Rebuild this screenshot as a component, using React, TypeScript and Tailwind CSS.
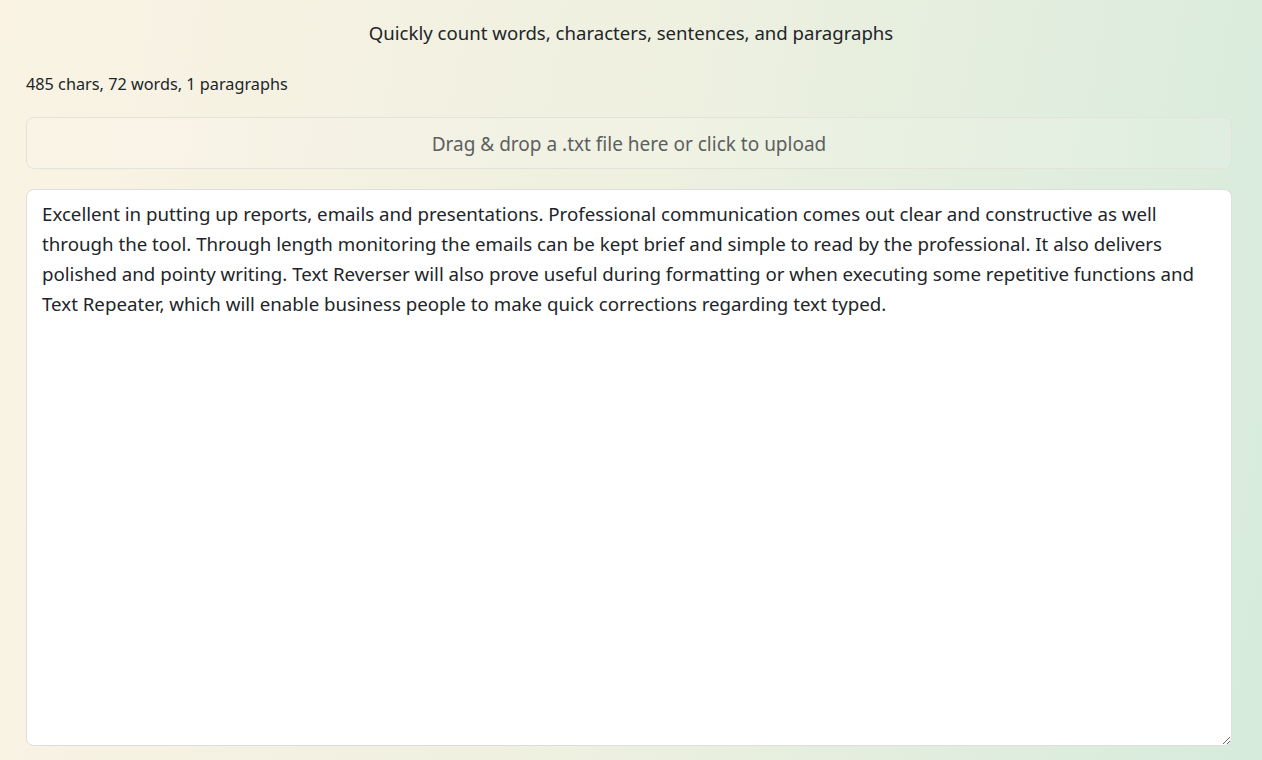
export default function App() {
  const text =
    "Excellent in putting up reports, emails and presentations. Professional communication comes out clear and constructive as well through the tool. Through length monitoring the emails can be kept brief and simple to read by the professional. It also delivers polished and pointy writing. Text Reverser will also prove useful during formatting or when executing some repetitive functions and Text Repeater, which will enable business people to make quick corrections regarding text typed.";
  return (
    <div
      className="h-[760px] w-full overflow-hidden bg-[linear-gradient(100deg,#faf3e4_0%,#eef0e0_50%,#d6ebdc_100%)] pl-[26px] pr-[30px] text-[#212529]"
      style={{ fontFamily: '"Noto Sans", "Open Sans", sans-serif' }}
    >
      <div className="flex h-[66px] items-center justify-center pb-[1px] pl-[4px] text-[18.6px]">
        Quickly count words, characters, sentences, and paragraphs
      </div>
      <div className="h-[35px] text-[16.25px] leading-[36px]">485 chars, 72 words, 1 paragraphs</div>
      <div className="mt-[16px] flex h-[52px] items-center justify-center rounded-[8px] border border-[#e3e3dc] bg-white/10 pt-[2px] text-[19px] text-[#5c5f5f]">
        Drag &amp; drop a .txt file here or click to upload
      </div>
      <textarea
        className="mt-[20px] block h-[557px] w-full resize-y rounded-[8px] border border-[#dedede] bg-white px-[15px] py-[9px] text-[18.7px] leading-[30px] text-[#212529] outline-none"
        defaultValue={text}
        style={{ fontFamily: '"Noto Sans", "Open Sans", sans-serif' }}
      />
    </div>
  );
}
